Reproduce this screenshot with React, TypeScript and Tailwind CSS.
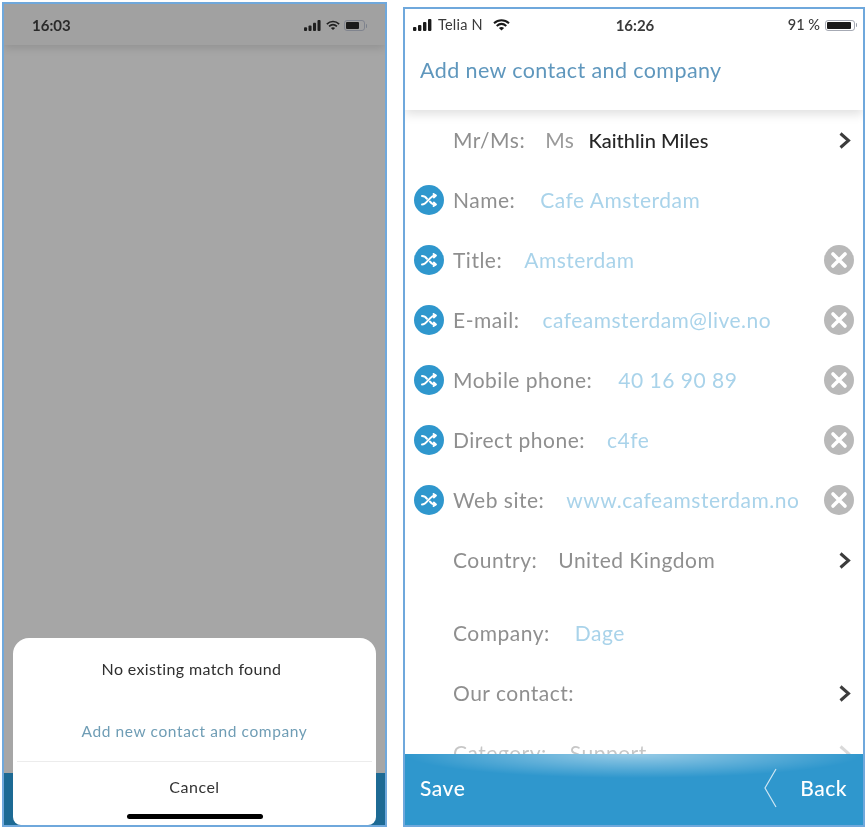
import React from "react";

const font = { fontFamily: '"Lato", "Noto Sans", sans-serif' };

function Signal({ className = "", width = 18, height = 11 }: { className?: string; width?: number; height?: number }) {
  return (
    <svg width={width} height={height} viewBox="0 0 20 12" className={className} fill="currentColor">
      <rect x="0" y="8" width="3.4" height="4" rx="1" />
      <rect x="5" y="6" width="3.4" height="6" rx="1" />
      <rect x="10" y="3" width="3.4" height="9" rx="1" />
      <rect x="15" y="0" width="3.4" height="12" rx="1" />
    </svg>
  );
}

function Wifi({ className = "", width = 14, height = 11 }: { className?: string; width?: number; height?: number }) {
  return (
    <svg width={width} height={height} viewBox="0 0 17 12" className={className} fill="none" stroke="currentColor" strokeWidth="2">
      <path d="M1 4.2C5.4 0.2 11.6 0.2 16 4.2" />
      <path d="M3.7 7C6.6 4.4 10.4 4.4 13.3 7" />
      <path d="M8.5 11.6L5.9 8.9C7.4 7.8 9.6 7.8 11.1 8.9Z" fill="currentColor" stroke="none" />
    </svg>
  );
}

function Battery({ level, w = 21 }: { level: number; w?: number }) {
  return (
    <div className="flex items-center">
      <div className="h-[11px] rounded-[3px] border border-gray-500/60 p-px" style={{ width: w }}>
        <div className="h-full rounded-[1px] bg-[#1a1a1a]" style={{ width: `${level}%` }} />
      </div>
      <div className="ml-px h-1 w-px rounded-r bg-gray-500/70" />
    </div>
  );
}

function ShuffleBadge() {
  return (
    <div className="flex h-[30px] w-[30px] shrink-0 items-center justify-center rounded-full bg-[#2f97cd]">
      <svg width="18" height="14" viewBox="0 0 18 14" fill="none" stroke="white" strokeWidth="2" strokeLinecap="round" strokeLinejoin="round">
        <path d="M2 11.5C7 11.5 9.5 2.5 15.5 2.5" />
        <path d="M2 3C4.4 3 6 4.4 7 5.8" />
        <path d="M10 8.6C11.4 10.4 13 11.5 15.5 11.5" />
        <path d="M13.6 1L15.8 2.5L14 4.4" />
        <path d="M14 9.6L15.8 11.5L13.6 13" />
      </svg>
    </div>
  );
}

function ClearBadge() {
  return (
    <div className="flex h-[30px] w-[30px] shrink-0 items-center justify-center rounded-full bg-[#b9b9b9]">
      <svg width="18" height="18" viewBox="0 0 18 18" stroke="white" strokeWidth="3.6" strokeLinecap="round">
        <path d="M3 3L15 15M15 3L3 15" />
      </svg>
    </div>
  );
}

function Chevron({ faded = false }: { faded?: boolean }) {
  return (
    <svg width="12" height="17" viewBox="0 0 12 17" fill="none" stroke={faded ? "#b5b5b5" : "#3c3c3c"} strokeWidth="3" className="shrink-0">
      <path d="M1.5 1.5L9.5 8.5L1.5 15.5" />
    </svg>
  );
}

type RowProps = {
  label: string;
  value?: string;
  gap?: string;
  shuffle?: boolean;
  clear?: boolean;
  chevron?: boolean;
  name?: string;
  valueClass?: string;
  fadedChevron?: boolean;
};

function Row({ label, value, gap = "ml-[23px]", shuffle, clear, chevron, fadedChevron, name, valueClass = "text-[#a9d3ea]" }: RowProps) {
  return (
    <div className="flex h-[60px] items-center pl-[9px] pr-[9px] text-[21px] tracking-[0.5px]">
      <div className="w-[30px] shrink-0">{shuffle && <ShuffleBadge />}</div>
      <div className="ml-[9px] flex min-w-0 flex-1 items-center whitespace-nowrap">
        <span className="text-[#8f8f8f]">{label}</span>
        {value && <span className={`${gap} ${valueClass}`}>{value}</span>}
        {name && <span className="ml-[14px] text-[20px] font-medium tracking-normal text-[#262626]">{name}</span>}
      </div>
      {clear && <ClearBadge />}
      {chevron && (
        <div className="flex w-[25px] justify-center pl-[6px]">
          <Chevron faded={fadedChevron} />
        </div>
      )}
    </div>
  );
}

function LeftPhone() {
  return (
    <div className="relative mt-[2px] flex h-[825px] w-[385px] shrink-0 flex-col overflow-hidden border-2 border-[#6fa8dc] bg-[#a6a6a6]">
      <div className="flex h-[41px] shrink-0 items-center justify-between bg-[#a1a1a1] pl-[28px] pr-[18px] pt-[2px] shadow-[0_3px_8px_rgba(0,0,0,0.12)]">
        <span className="text-[15px] font-bold text-[#2a2a2a]">16:03</span>
        <div className="flex items-center gap-[4px] text-[#1f1f1f]">
          <Signal />
          <Wifi />
          <Battery level={78} />
        </div>
      </div>
      <div className="flex-1" />
      <div className="h-[52px] shrink-0 bg-[#1d6a94]" />
      <div className="absolute inset-x-[9px] bottom-0 flex h-[187px] flex-col items-center rounded-t-[16px] rounded-b-[8px] bg-white">
        <div className="mt-[20px] pr-[6px] text-[16px] leading-[22px] tracking-[0.35px] text-[#2f2f2f]">No existing match found</div>
        <div className="mt-[40px] text-[15.5px] leading-[22px] tracking-[0.6px] text-[#6f9db5]">Add new contact and company</div>
        <div className="mt-[19px] h-px w-[355px] bg-[#ececec]" />
        <div className="mt-[14px] text-[16px] leading-[22px] tracking-[0.5px] text-[#333333]">Cancel</div>
        <div className="mt-[16px] h-[5px] w-[136px] rounded-full bg-black" />
      </div>
    </div>
  );
}

function RightPhone() {
  return (
    <div className="relative mt-[7px] flex h-[820px] w-[462px] shrink-0 flex-col overflow-hidden border-2 border-[#6fa8dc] bg-white">
      <div className="relative z-10 shrink-0 bg-white shadow-[0_4px_10px_rgba(0,0,0,0.13)]">
        <div className="grid h-[32px] grid-cols-3 items-center pl-[8px] pr-[6px] text-[14.5px] text-[#3a3a3a]">
          <div className="flex items-center gap-[5px]">
            <Signal width={20} height={12} className="text-[#1a1a1a]" />
            <span className="tracking-[0.2px]">Telia N</span>
            <Wifi width={17} height={12} className="ml-[5px] text-[#1a1a1a]" />
          </div>
          <div className="text-center text-[15px] font-bold">16:26</div>
          <div className="flex items-center justify-end gap-[5px] font-medium">
            <span>91 %</span>
            <Battery level={92} w={30} />
          </div>
        </div>
        <div className="flex h-[69px] items-start pl-[15px] pt-[11px] text-[21.5px] leading-[36px] tracking-[0.4px] text-[#5f97bd]">Add new contact and company</div>
      </div>
      <div className="relative min-h-0 flex-1 overflow-hidden">
        <Row label="Mr/Ms:" value="Ms" gap="ml-[20px]" valueClass="text-[#9a9a9a]" name="Kaithlin Miles" chevron />
        <Row label="Name:" value="Cafe Amsterdam" gap="ml-[25px]" shuffle />
        <Row label="Title:" value="Amsterdam" gap="ml-[22px]" shuffle clear />
        <Row label="E-mail:" value="cafeamsterdam@live.no" gap="ml-[23px]" shuffle clear />
        <Row label="Mobile phone:" value="40 16 90 89" gap="ml-[26px]" shuffle clear />
        <Row label="Direct phone:" value="c4fe" gap="ml-[22px]" shuffle clear />
        <Row label="Web site:" value="www.cafeamsterdam.no" gap="ml-[22px]" shuffle clear />
        <Row label="Country:" value="United Kingdom" gap="ml-[21px]" valueClass="text-[#8f8f8f]" chevron />
        <div className="h-[13px]" />
        <Row label="Company:" value="Dage" gap="ml-[25px]" />
        <Row label="Our contact:" chevron />
        <div className="opacity-50">
          <Row label="Category:" value="Support" gap="ml-[23px]" valueClass="text-[#8f8f8f]" chevron fadedChevron />
        </div>
      </div>
      <div className="relative flex h-[71px] shrink-0 items-center justify-between bg-[#2f97cd] pb-[4px] pl-[15px] pr-[16px] text-[21px] tracking-[0.5px] text-white">
        <div className="absolute inset-x-0 top-0 h-[24px] bg-[radial-gradient(ellipse_50%_100%_at_50%_0%,rgba(255,255,255,0.5),rgba(255,255,255,0))]" />
        <span className="relative font-medium">Save</span>
        <div className="relative flex items-center gap-[23px]">
          <svg width="14" height="40" viewBox="0 0 14 40" fill="none" stroke="#cfe6f3" strokeWidth="1.2">
            <path d="M13 1L2 20L13 39" />
          </svg>
          <span className="font-medium">Back</span>
        </div>
      </div>
    </div>
  );
}

export default function App() {
  return (
    <div className="flex h-[829px] w-[867px] overflow-hidden bg-white pl-[2px] blur-[0.5px]" style={font}>
      <LeftPhone />
      <div className="w-[16px] shrink-0" />
      <RightPhone />
    </div>
  );
}
